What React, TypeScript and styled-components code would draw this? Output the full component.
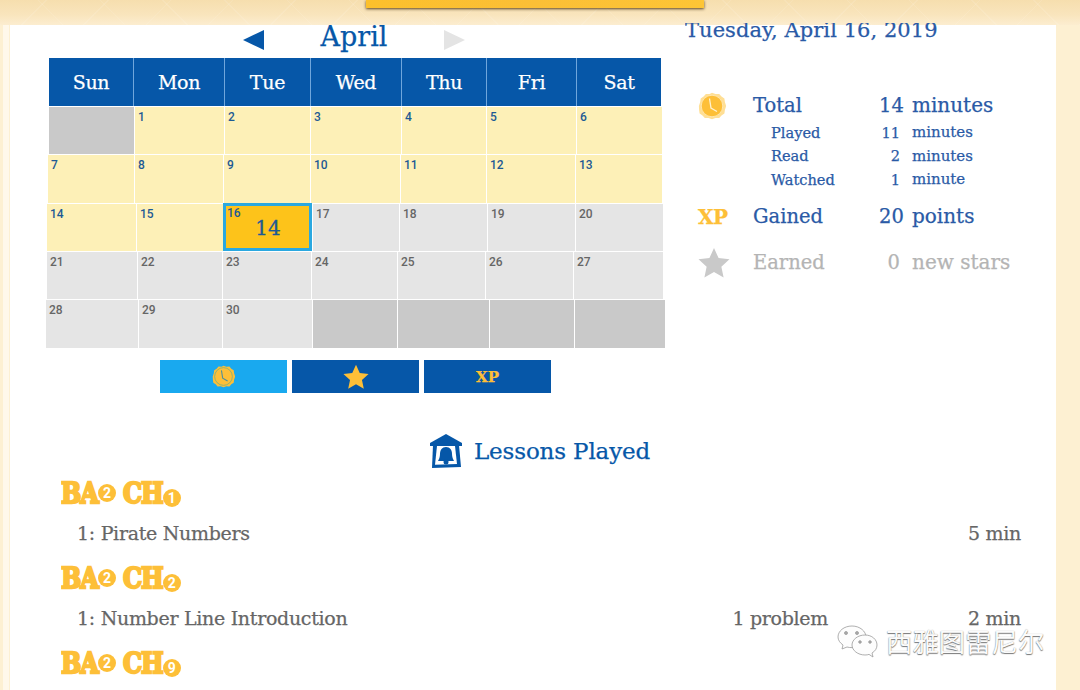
import React from "react";
import styled, { createGlobalStyle } from "styled-components";

const SLAB = `"DejaVu Serif", "Liberation Serif", serif`;
const BLUE = "#0657a8";
const NAVY = "#2a5aa6";
const GOLD = "#fdbf38";

const Global = createGlobalStyle`
  html, body { margin: 0; padding: 0; background: #fff; }
  body { font-family: ${SLAB}; overflow: hidden; }
  #root { width: 1080px; height: 690px; overflow: hidden; }
`;

const Page = styled.div`
  position: relative;
  width: 1080px;
  height: 690px;
  overflow: hidden;
  display: flex;
  flex-direction: column;
  background: #fdf0d2;
`;

const TopBand = styled.div`
  height: 25px;
  flex: none;
  display: flex;
  justify-content: center;
  padding-right: 10px;
  background:
    repeating-linear-gradient(45deg, rgba(255, 255, 255, 0.1) 0 1px, transparent 1px 44px),
    repeating-linear-gradient(-45deg, rgba(255, 255, 255, 0.1) 0 1px, transparent 1px 44px),
    linear-gradient(180deg, #f6deae 0%, #f9e5bd 60%, #fcedd0 100%);
`;

const Ribbon = styled.div`
  width: 338px;
  height: 8px;
  background: linear-gradient(90deg, #fcc02c, #fbbf36 50%, #fdc535);
  box-shadow: 0 1px 3px rgba(60, 35, 0, 0.85);
`;

const Sheet = styled.div`
  flex: 1;
  margin: 0 24px 0 9px;
  padding-left: 37px;
  background: #fff;
  box-shadow: -6px 0 0 #fff8ea;
  border-left: 1px solid #fdf0d2;
  min-height: 0;
  display: flex;
  flex-direction: column;
  -webkit-text-stroke: 0.25px currentColor;
`;

const TopRow = styled.div`
  display: flex;
  height: 368px;
  flex: none;
`;

const CalendarCol = styled.div`
  width: 620px;
  flex: none;
`;

const MonthBar = styled.div`
  height: 33px;
  display: flex;
  align-items: center;
  color: ${BLUE};
  padding-left: 196px;
`;

const MonthName = styled.div`
  width: 180px;
  text-align: center;
  font-size: 27px;
  line-height: 24px;
  margin-top: -10px;
`;

const Arrow = styled.div<{ $dir: "left" | "right"; $active: boolean }>`
  width: 0;
  height: 0;
  border-top: 10px solid transparent;
  border-bottom: 10px solid transparent;
  ${(p) =>
    p.$dir === "left"
      ? `border-right: 21px solid ${p.$active ? BLUE : "#e4e4e4"};`
      : `border-left: 21px solid ${p.$active ? BLUE : "#e4e4e4"};`}
  margin-top: -4px;
`;

const Head = styled.div`
  display: grid;
  width: 612px;
  margin-left: 2px;
  height: 48px;
  background: ${BLUE};
`;

const HeadCell = styled.div`
  display: flex;
  align-items: center;
  justify-content: center;
  color: #fff;
  font-size: 19px;
  letter-spacing: -0.3px;
  border-left: 1px solid #6fa6dc;
  &:first-child { border-left: none; }
`;

const Row = styled.div<{ $h: number; $indent: number }>`
  display: grid;
  height: ${(p) => p.$h}px;
  margin-left: ${(p) => p.$indent}px;
`;

type Tone = "active" | "idle" | "blank" | "today";

const toneBg: Record<Tone, string> = {
  active: "#fdf0b7",
  idle: "#e5e5e5",
  blank: "#c9c9c9",
  today: "#fdc31a",
};

const Cell = styled.div<{ $tone: Tone }>`
  position: relative;
  box-sizing: border-box;
  background: ${(p) => toneBg[p.$tone]};
  border-left: 1px solid #fff;
  border-top: 1px solid #fff;
  padding: 3px 0 0 3px;
  font-family: Roboto, sans-serif;
  font-size: 12px;
  line-height: 14px;
  font-weight: 500;
  -webkit-text-stroke: 0;
  color: ${(p) => (p.$tone === "idle" ? "#666" : "#1d5a94")};
  &:first-child { border-left: none; }
  ${(p) => (p.$tone === "today" ? "border: 3px solid #2aa8e0; padding: 0 0 0 1px;" : "")}
`;

const CellValue = styled.div`
  text-align: center;
  font-family: ${SLAB};
  font-size: 20px;
  line-height: 22px;
  font-weight: 400;
  color: #1d5a94;
  -webkit-text-stroke: 0.3px currentColor;
  margin-top: -3px;
`;

const TabRow = styled.div`
  display: flex;
  gap: 5px;
  margin: 12px 0 0 113px;
`;

const Tab = styled.div<{ $on: boolean }>`
  width: 127px;
  height: 33px;
  display: flex;
  align-items: center;
  justify-content: center;
  background: ${(p) => (p.$on ? "#19a9ef" : BLUE)};
  color: ${GOLD};
  font-size: 15px;
  font-weight: 700;
`;

const StatsCol = styled.div`
  flex: 1;
  padding-left: 19px;
  color: ${NAVY};
  position: relative;
`;

const DateClip = styled.div`
  height: 19px;
  margin-top: -2px;
  margin-left: -1px;
  overflow: hidden;
  display: flex;
  align-items: flex-end;
  white-space: nowrap;
`;

const DateText = styled.div`
  font-size: 21px;
  line-height: 24px;
  flex: none;
  letter-spacing: 0.05px;
`;

const Stats = styled.div`
  display: grid;
  grid-template-columns: 55px 126px 21px 1fr;
  margin: 49px 0 0 12px;
`;

const StatIcon = styled.div`
  display: flex;
  align-items: center;
  color: ${GOLD};
  font-weight: 700;
  font-size: 20px;
  letter-spacing: -0.5px;
  margin-top: -1px;
`;

const Label = styled.div<{ $big?: boolean; $dim?: boolean; $h: number }>`
  font-size: ${(p) => (p.$big ? 19.5 : 14.6)}px;
  height: ${(p) => p.$h}px;
  line-height: ${(p) => p.$h - 1}px;
  padding-left: ${(p) => (p.$big ? 0 : 18)}px;
  color: ${(p) => (p.$dim ? "#b4b4b4" : NAVY)};
  white-space: nowrap;
`;

const Num = styled(Label)`
  padding-left: 0;
  text-align: right;
`;

const Unit = styled(Label)<{ $big?: boolean }>`
  padding-left: 12px;
  font-size: ${(p) => (p.$big ? 20 : 15)}px;
`;

const LessonsHead = styled.div`
  display: flex;
  align-items: center;
  gap: 11px;
  margin: 39px 0 0 382px;
  height: 38px;
  color: ${BLUE};
  font-size: 23px;
  letter-spacing: -0.15px;
`;

const LessonList = styled.div`
  margin-top: 6px;
  margin-left: 13px;
  width: 962px;
`;

const Badge = styled.div`
  height: 34px;
  display: flex;
  align-items: center;
  color: ${GOLD};
  padding-left: 1px;
  -webkit-text-stroke: 0;
`;

const BadgeLetters = styled.span<{ $gap?: boolean }>`
  display: inline-block;
  font-family: "DejaVu Serif", serif;
  font-weight: 700;
  font-size: 24px;
  letter-spacing: -1px;
  -webkit-text-stroke: 2px ${GOLD};
  line-height: 28px;
  transform: scaleY(1.2);
  margin-left: ${(p) => (p.$gap ? 7 : 0)}px;
`;

const BadgeNum = styled.span<{ $low?: boolean }>`
  width: 18px;
  height: 18px;
  border-radius: 50%;
  background: ${GOLD};
  color: #fff;
  font-family: Roboto, sans-serif;
  font-weight: 700;
  font-size: 14px;
  display: inline-flex;
  align-items: center;
  justify-content: center;
  margin-top: ${(p) => (p.$low ? 10 : 0)}px;
  flex: none;
`;

const LessonRow = styled.div`
  height: 51px;
  padding: 0 1px 6px 17px;
  box-sizing: border-box;
  display: grid;
  grid-template-columns: 1fr 250px 193px;
  align-items: center;
  color: #666;
  font-size: 19px;
  letter-spacing: -0.3px;
  white-space: nowrap;
`;

const Right = styled.div`
  text-align: right;
`;

const Watermark = styled.div`
  position: absolute;
  left: 836px;
  top: 623px;
  display: flex;
  align-items: center;
  gap: 6px;
  font-family: "Noto Sans CJK SC", sans-serif;
  font-size: 26.4px;
  line-height: 36px;
  color: #fbfbfb;
  text-shadow: 0 1px 1px #777, 0 0 1px #999;
`;

const Clock = ({ size, edge, line, hand }: { size: number; edge: string; line: string; hand: string }) => (
  <svg width={size} height={size} viewBox="0 0 28 28">
    <path
      d="M14 .8l3.500 1.300 3.700-.2 2.300 2.700 2.900 1.800.5 3.600 1.300 4-1.300 4-.5 3.600-2.900 1.800-2.300 2.700-3.700-.2-3.500 1.300-3.500-1.300-3.700.2-2.300-2.700-2.900-1.800-.5-3.600L.9 14l1.300-4 .5-3.600 2.900-1.800 2.300-2.700 3.700.2z"
      fill={edge}
    />
    <circle cx="14" cy="14" r="10.800" fill={GOLD} stroke={line} strokeWidth="1" />
    <path d="M11.500 6.500L13 16l6 3.500" fill="none" stroke={hand} strokeWidth="1.300" />
  </svg>
);

const Star = ({ size, color }: { size: number; color: string }) => (
  <svg width={size} height={size} viewBox="0 0 30 30">
    <path d="M15 1l4.300 9.400 10.200 1.200-7.600 6.900 2.100 10.100L15 23.500l-9 5.100 2.100-10.100L.5 11.600l10.200-1.200z" fill={color} />
  </svg>
);

const LessonBell = () => (
  <svg width="34" height="36" viewBox="0 0 34 36">
    <path d="M17 1L33 10v3H1v-3z" fill={BLUE} />
    <path d="M4 12h26l2 22-29 1z" fill={BLUE} />
    <path d="M8 13h18l2 18-22 .8z" fill="#fff" />
    <path d="M17 14c4 0 6 3 6 7 0 3 1 5 2 7H9c1-2 2-4 2-7 0-4 2-7 6-7z" fill={BLUE} />
    <circle cx="17" cy="29" r="2.500" fill={BLUE} />
  </svg>
);

const WeChat = () => (
  <svg width="44" height="36" viewBox="0 0 44 36" fill="#fdfdfd" stroke="#9a9a9a" strokeWidth="0.800">
    <path d="M16 3C8 3 2 8 2 14c0 3 2 6 5 8l-1 4 5-2c2 .5 3 .6 5 .6 8 0 14-5 14-10.600S24 3 16 3z" />
    <path d="M29 12c-7 0-13 4.500-13 10s6 10 13 10c1.500 0 3-.2 4-.6l4 2.600-1-4c3.500-2 5-5 5-8 0-5.500-5-10-12-10z" />
    <circle cx="10" cy="10" r="1.500" fill="#aaa" />
    <circle cx="21" cy="10" r="1.500" fill="#aaa" />
    <circle cx="24" cy="19" r="1.300" fill="#aaa" />
    <circle cx="34" cy="19" r="1.300" fill="#aaa" />
  </svg>
);

const DAYS = ["Sun", "Mon", "Tue", "Wed", "Thu", "Fri", "Sat"];
const HEAD_COLS = "84px 91px 86px 91px 85px 90px 85px";

const ROWS: { h: number; indent: number; cols: string; cells: { n?: number; t: Tone; v?: number }[] }[] = [
  {
    h: 48, indent: 2, cols: "85px 90px 86px 91px 85px 90px 86px",
    cells: [{ t: "blank" }, ...[1, 2, 3, 4, 5, 6].map((n) => ({ n, t: "active" as Tone }))],
  },
  {
    h: 49, indent: 1, cols: "86px 89px 87px 90px 86px 89px 87px",
    cells: [7, 8, 9, 10, 11, 12, 13].map((n) => ({ n, t: "active" as Tone })),
  },
  {
    h: 48, indent: 0, cols: "89px 87px 89px 87px 88px 88px 88px",
    cells: [
      { n: 14, t: "active" }, { n: 15, t: "active" }, { n: 16, t: "today", v: 14 },
      ...[17, 18, 19, 20].map((n) => ({ n, t: "idle" as Tone })),
    ],
  },
  {
    h: 48, indent: 0, cols: "90px 85px 89px 86px 88px 88px 90px",
    cells: [21, 22, 23, 24, 25, 26, 27].map((n) => ({ n, t: "idle" as Tone })),
  },
  {
    h: 49, indent: -1, cols: "92px 84px 90px 85px 92px 85px 91px",
    cells: [
      { n: 28, t: "idle" }, { n: 29, t: "idle" }, { n: 30, t: "idle" },
      { t: "blank" }, { t: "blank" }, { t: "blank" }, { t: "blank" },
    ],
  },
];

const STATS = [
  { icon: <Clock size={28} edge="#ffdf95" line="#ffe7ae" hand="#fff2d0" />, label: "Total", num: "14", unit: "minutes", big: true, h: 30 },
  { label: "Played", num: "11", unit: "minutes", h: 24 },
  { label: "Read", num: "2", unit: "minutes", h: 23 },
  { label: "Watched", num: "1", unit: "minute", h: 24 },
  { icon: "XP", label: "Gained", num: "20", unit: "points", big: true, h: 50 },
  { icon: <Star size={32} color="#c9c9c9" />, label: "Earned", num: "0", unit: "new stars", big: true, dim: true, h: 42 },
];

const LESSONS = [
  { ch: "1", name: "1: Pirate Numbers", mid: "", time: "5 min" },
  { ch: "2", name: "1: Number Line Introduction", mid: "1 problem", time: "2 min" },
  { ch: "9", name: "", mid: "", time: "" },
];

export default function App() {
  return (
    <Page>
      <Global />
      <TopBand>
        <Ribbon />
      </TopBand>
      <Sheet>
        <TopRow>
          <CalendarCol>
            <MonthBar>
              <Arrow $dir="left" $active />
              <MonthName>April</MonthName>
              <Arrow $dir="right" $active={false} />
            </MonthBar>
            <Head style={{ gridTemplateColumns: HEAD_COLS }}>
              {DAYS.map((d) => (
                <HeadCell key={d}>{d}</HeadCell>
              ))}
            </Head>
            {ROWS.map((r, i) => (
              <Row key={i} $h={r.h} $indent={r.indent} style={{ gridTemplateColumns: r.cols }}>
                {r.cells.map((c, j) => (
                  <Cell key={j} $tone={c.t}>
                    {c.n}
                    {c.v !== undefined && <CellValue>{c.v}</CellValue>}
                  </Cell>
                ))}
              </Row>
            ))}
            <TabRow>
              <Tab $on>
                <Clock size={23} edge={GOLD} line="#7fb07a" hand="#4f8f9a" />
              </Tab>
              <Tab $on={false}>
                <Star size={26} color={GOLD} />
              </Tab>
              <Tab $on={false}>XP</Tab>
            </TabRow>
          </CalendarCol>
          <StatsCol>
            <DateClip>
              <DateText>Tuesday, April 16, 2019</DateText>
            </DateClip>
            <Stats>
              {STATS.map((s) => (
                <React.Fragment key={s.label}>
                  <StatIcon>{s.icon}</StatIcon>
                  <Label $big={s.big} $dim={s.dim} $h={s.h}>{s.label}</Label>
                  <Num $big={s.big} $dim={s.dim} $h={s.h}>{s.num}</Num>
                  <Unit $big={s.big} $dim={s.dim} $h={s.h}>{s.unit}</Unit>
                </React.Fragment>
              ))}
            </Stats>
          </StatsCol>
        </TopRow>
        <LessonsHead>
          <LessonBell />
          Lessons Played
        </LessonsHead>
        <LessonList>
          {LESSONS.map((l) => (
            <React.Fragment key={l.ch}>
              <Badge>
                <BadgeLetters>BA</BadgeLetters>
                <BadgeNum>2</BadgeNum>
                <BadgeLetters $gap>CH</BadgeLetters>
                <BadgeNum $low>{l.ch}</BadgeNum>
              </Badge>
              {l.name && (
                <LessonRow>
                  <div>{l.name}</div>
                  <Right>{l.mid}</Right>
                  <Right>{l.time}</Right>
                </LessonRow>
              )}
            </React.Fragment>
          ))}
        </LessonList>
      </Sheet>
      <Watermark>
        <WeChat />
        西雅图雷尼尔
      </Watermark>
    </Page>
  );
}
